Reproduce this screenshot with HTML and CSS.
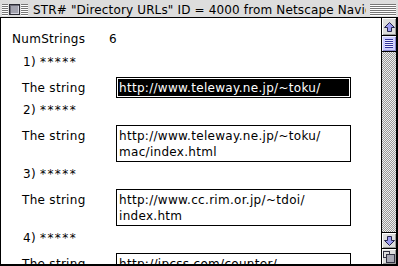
FILE: index.html
```html
<!DOCTYPE html>
<html>
<head>
<meta charset="utf-8">
<link rel="stylesheet" href="styles.css">
</head>
<body>
<div class="window">
  <div class="titlebar">
    <div class="stripes stripes-left"><div class="closebox"></div></div>
    <div class="title">STR# "Directory URLs" ID = 4000 from Netscape Navigator</div>
    <div class="stripes stripes-right"></div>
  </div>
  <div class="main">
    <div class="content">
      <div class="numrow"><span class="numlabel">NumStrings</span><span>6</span></div>
      <div class="entry">
        <div class="entry-label">1) <span class="stars">*****</span></div>
        <div class="field"><span class="field-label">The string</span><div class="box box-selected"><div class="sel">http://www.teleway.ne.jp/~toku/</div></div></div>
      </div>
      <div class="entry">
        <div class="entry-label">2) <span class="stars">*****</span></div>
        <div class="field"><span class="field-label">The string</span><div class="box">http://www.teleway.ne.jp/~toku/<br>mac/index.html</div></div>
      </div>
      <div class="entry">
        <div class="entry-label">3) <span class="stars">*****</span></div>
        <div class="field"><span class="field-label">The string</span><div class="box">http://www.cc.rim.or.jp/~tdoi/<br>index.htm</div></div>
      </div>
      <div class="entry">
        <div class="entry-label">4) <span class="stars">*****</span></div>
        <div class="field"><span class="field-label">The string</span><div class="box">http://jpcss.com/counter/<br>&nbsp;</div></div>
      </div>
    </div>
    <div class="scrollbar">
      <div class="arrow arrow-up">
        <svg width="11" height="10" viewBox="0 0 11 10"><polygon points="5.5,0.5 10.5,5.5 7.5,5.5 7.5,9.5 3.5,9.5 3.5,5.5 0.5,5.5" fill="#9c9cf0" stroke="#22224a" stroke-width="1"/></svg>
      </div>
      <div class="thumb"><div class="grip"></div></div>
      <div class="track"></div>
      <div class="arrow arrow-down">
        <svg width="11" height="10" viewBox="0 0 11 10"><polygon points="5.5,9.5 10.5,4.5 7.5,4.5 7.5,0.5 3.5,0.5 3.5,4.5 0.5,4.5" fill="#9c9cf0" stroke="#22224a" stroke-width="1"/></svg>
      </div>
      <div class="grow">
        <svg width="12" height="12" viewBox="0 0 12 12"><rect x="0.5" y="0.5" width="6" height="6" fill="#dddddd" stroke="#333344"/><rect x="3.5" y="3.5" width="8" height="8" fill="#a8a8b4" stroke="#333344"/></svg>
      </div>
    </div>
  </div>
</div>
</body>
</html>
```
FILE: styles.css
```css
html, body {
  margin: 0;
  padding: 0;
  background: #ffffff;
}
body {
  width: 398px;
  height: 266px;
  overflow: hidden;
  font-family: "DejaVu Sans", "Liberation Sans", sans-serif;
  font-size: 12px;
  color: #000;
}
.window {
  width: 398px;
  height: 266px;
  display: flex;
  flex-direction: column;
}
.titlebar {
  height: 17px;
  flex: none;
  display: flex;
  align-items: flex-start;
  background: #dddddd;
  border-bottom: 1px solid #000;
  padding: 0 2px;
}
.stripes {
  flex: none;
  width: 26px;
  height: 12px;
  margin-top: 4px;
  background: repeating-linear-gradient(to bottom, #777777 0 1px, #ffffff 1px 2px);
}
.stripes-left {
  box-sizing: border-box;
  padding-left: 7px;
}
.closebox {
  width: 11px;
  height: 11px;
  box-sizing: border-box;
  border: 1px solid #2a2a33;
  background: #a2a2ae;
  box-shadow: 0 0 0 1px #dddddd, inset 1px 1px 0 #6c6c78, inset -1px -1px 0 #d4d4de;
}
.title {
  flex: none;
  width: 333px;
  margin-left: 5px;
  height: 17px;
  box-sizing: border-box;
  padding-top: 2px;
  line-height: 16px;
  letter-spacing: 0.15px;
  white-space: nowrap;
  overflow: hidden;
}
.stripes-right {
  margin-left: 4px;
}
.main {
  flex: 1;
  display: flex;
  border-left: 1px solid #000;
  border-bottom: 2px solid #000;
  min-height: 0;
}
.content {
  flex: 1;
  overflow: hidden;
  background: #fff;
  padding: 13px 0 0 11px;
  letter-spacing: 0.3px;
  line-height: 16px;
}
.numrow {
  display: flex;
  height: 16px;
}
.numlabel {
  width: 97px;
}
.entry-label {
  margin: 7px 0 7px 11px;
  height: 16px;
}
.stars {
  letter-spacing: 1.4px;
}
.entry + .entry .entry-label {
  margin-top: 4px;
}
.field {
  display: flex;
  align-items: flex-start;
  margin-left: 10px;
}
.field-label {
  width: 94px;
  flex: none;
  padding-top: 3px;
}
.box {
  flex: none;
  width: 235px;
  box-sizing: border-box;
  border: 1px solid #000;
  padding: 2px 2px 1px 2px;
  white-space: nowrap;
  overflow: hidden;
}
.box-selected {
  padding: 1px;
}
.sel {
  background: #000;
  color: #fff;
  padding: 1px 1px 0 1px;
}
.scrollbar {
  flex: none;
  width: 14px;
  border-left: 1px solid #000;
  border-right: 2px solid #000;
  display: flex;
  flex-direction: column;
  background: #dddddd;
}
.arrow {
  flex: none;
  display: flex;
  align-items: center;
  justify-content: center;
  background: #dddddd;
  box-shadow: inset 1px 1px 0 #ffffff, inset -1px -1px 0 #999999;
}
.arrow-up {
  height: 17px;
  border-bottom: 1px solid #000;
}
.arrow-down {
  height: 15px;
  border-top: 1px solid #000;
}
.thumb {
  flex: none;
  height: 15px;
  border-bottom: 1px solid #000;
  background: #ccccff;
  box-shadow: inset 1px 1px 0 #eeeeff, inset -1px -1px 0 #8888cc;
  display: flex;
  align-items: center;
  justify-content: center;
}
.grip {
  width: 8px;
  height: 9px;
  background: repeating-linear-gradient(to bottom, #333399 0 1px, #eeeeff 1px 2px);
}
.track {
  flex: 1;
  background-color: #eeeeee;
  background-image: repeating-conic-gradient(#999999 0 25%, #eeeeee 0 50%);
  background-size: 2px 2px;
}
.grow {
  flex: none;
  height: 15px;
  border-top: 1px solid #000;
  display: flex;
  align-items: center;
  justify-content: center;
  background: #dddddd;
  box-shadow: inset 1px 1px 0 #ffffff, inset -1px -1px 0 #999999;
}
```
